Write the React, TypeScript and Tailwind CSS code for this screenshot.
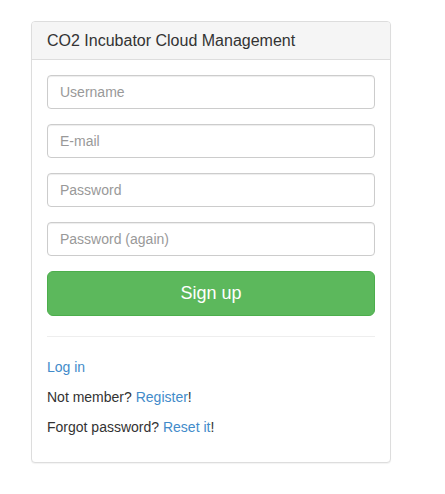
export default function App() {
  const fields = [
    { ph: 'Username', type: 'text' },
    { ph: 'E-mail', type: 'email' },
    { ph: 'Password', type: 'password' },
    { ph: 'Password (again)', type: 'password' },
  ];

  return (
    <div className="min-h-[494px] bg-white pt-[21px] pl-[31px] text-[14px] leading-[20px] text-[#333]" style={{ fontFamily: '"Liberation Sans", Arial, sans-serif' }}>
      <div className="w-[360px] rounded-[4px] border border-[#ddd] bg-white shadow-[0_1px_1px_rgba(0,0,0,0.05)]">
        <div className="rounded-t-[3px] border-b border-[#ddd] bg-[#f5f5f5] px-[15px] py-[10px]">
          <h3 className="text-[16px] leading-[17px] text-[#333]">CO2 Incubator Cloud Management</h3>
        </div>

        <div className="p-[15px]">
          <form className="flex flex-col gap-[15px]" onSubmit={(e) => e.preventDefault()}>
            {fields.map((f) => (
              <input
                key={f.ph}
                type={f.type}
                placeholder={f.ph}
                className="block h-[34px] w-full rounded-[4px] border border-[#ccc] bg-white px-[12px] py-[6px] text-[14px] text-[#555] shadow-[inset_0_1px_1px_rgba(0,0,0,0.075)] outline-none placeholder:text-[#999]"
              />
            ))}
            <button
              type="submit"
              className="block h-[45px] w-full rounded-[6px] border border-[#4cae4c] bg-[#5cb85c] px-[16px] text-[18px] leading-[1.33] text-white"
            >
              Sign up
            </button>
          </form>

          <hr className="my-[20px] border-t border-[#eee]" />

          <p className="mb-[10px]">
            <a href="#" className="text-[#428bca]">Log in</a>
          </p>
          <p className="mb-[10px]">
            Not member? <a href="#" className="text-[#428bca]">Register</a>!
          </p>
          <p className="mb-[10px]">
            Forgot password? <a href="#" className="text-[#428bca]">Reset it</a>!
          </p>
        </div>
      </div>
    </div>
  );
}
